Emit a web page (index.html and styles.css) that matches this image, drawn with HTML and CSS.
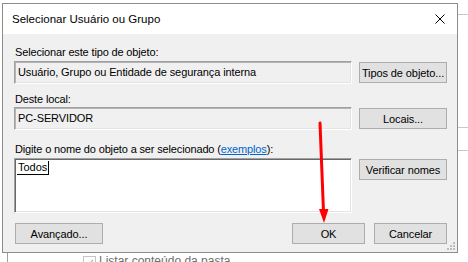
FILE: index.html
```html
<!DOCTYPE html>
<html lang="pt-BR">
<head>
  <meta charset="UTF-8">
  <title>Selecionar Usuário ou Grupo</title>
  <link rel="stylesheet" href="styles.css">
</head>
<body>
  <div class="desktop">
    <!-- window behind the dialog -->
    <div class="behind-line top"></div>
    <div class="behind-line mid1"></div>
    <div class="behind-line mid2"></div>
    <div class="behind-edge"></div>

    <div class="dialog">
      <div class="titlebar">
        <span class="title">Selecionar Usuário ou Grupo</span>
        <svg class="close" width="10" height="10" viewBox="0 0 10 10">
          <path d="M0.5 0.5 L9.5 9.5 M9.5 0.5 L0.5 9.5" stroke="#000" stroke-width="1" fill="none"/>
        </svg>
      </div>

      <div class="content">
        <div class="section first">
          <div class="label">Selecionar este tipo de objeto:</div>
          <div class="row">
            <div class="textbox readonly">Usuário, Grupo ou Entidade de segurança interna</div>
            <button class="button">Tipos de objeto...</button>
          </div>
        </div>

        <div class="section second">
          <div class="label tight">Deste local:</div>
          <div class="row">
            <div class="textbox readonly">PC-SERVIDOR</div>
            <button class="button">Locais...</button>
          </div>
        </div>

        <div class="section third">
          <div class="label">Digite o nome do objeto a ser selecionado (<a href="#" class="link">exemplos</a>):</div>
          <div class="row top">
            <div class="textarea"><span class="entry">Todos</span></div>
            <button class="button">Verificar nomes</button>
          </div>
        </div>

        <div class="actions">
          <button class="button">Avançado...</button>
          <button class="button ok">OK</button>
          <button class="button cancel">Cancelar</button>
        </div>
      </div>

      <svg class="grip" width="9" height="9" viewBox="0 0 9 9">
        <rect x="7" y="1" width="2" height="2" fill="#bdbdbd"/>
        <rect x="4" y="4" width="2" height="2" fill="#bdbdbd"/>
        <rect x="7" y="4" width="2" height="2" fill="#bdbdbd"/>
        <rect x="1" y="7" width="2" height="2" fill="#bdbdbd"/>
        <rect x="4" y="7" width="2" height="2" fill="#bdbdbd"/>
        <rect x="7" y="7" width="2" height="2" fill="#bdbdbd"/>
      </svg>
    </div>

    <div class="behind-row">
      <span class="checkbox">
        <svg width="11" height="11" viewBox="0 0 11 11">
          <path d="M2 5.5 L4.5 8 L9 3" stroke="#b5b5b5" stroke-width="1.2" fill="none"/>
        </svg>
      </span>
      <span class="behind-text">Listar conteúdo da pasta</span>
    </div>

    <!-- red annotation arrow -->
    <svg class="arrow" width="468" height="262" viewBox="0 0 468 262">
      <line x1="320" y1="123" x2="323.5" y2="212" stroke="#f00" stroke-width="3" stroke-linecap="round"/>
      <polygon points="319,209 328.5,209 324,223" fill="#f00"/>
    </svg>
  </div>
</body>
</html>
```

FILE: styles.css
```css
body {
  margin: 0;
  background-color: #fff;
  font-family: "Liberation Sans", Arial, sans-serif;
  font-size: 11px;
  color: #000;
}
.desktop {
  position: relative;
  width: 468px;
  height: 262px;
  overflow: hidden;
}
.behind-line {
  position: absolute;
  left: 458px;
  width: 10px;
  height: 1px;
  background-color: #c8c8c8;
}
.behind-line.top {
  top: 14px;
}
.behind-line.mid1 {
  top: 127px;
}
.behind-line.mid2 {
  top: 150px;
}
.behind-edge {
  position: absolute;
  left: 7px;
  top: 253px;
  width: 1px;
  height: 9px;
  background-color: #a0a0a0;
}
.dialog {
  position: relative;
  margin: 3px 0 0 2px;
  width: 456px;
  height: 250px;
  box-sizing: border-box;
  border: 1px solid #8c8c8c;
  background-color: #f0f0f0;
}
.titlebar {
  height: 30px;
  background-color: #fff;
  display: flex;
  align-items: center;
  justify-content: space-between;
  padding: 0 12px 0 9px;
}
.title {
  font-size: 11.5px;
}
.content {
  padding: 11px 10px 0 11px;
}
.section.second {
  margin-top: 8px;
}
.section.third {
  margin-top: 12px;
}
.label {
  line-height: 14px;
  margin-bottom: 2px;
  padding-left: 1px;
  letter-spacing: -0.15px;
}
.label.tight {
  margin-bottom: 1px;
}
.link {
  color: #0066cc;
}
.row {
  display: grid;
  grid-template-columns: 338px 88px;
  column-gap: 7px;
  align-items: center;
}
.row.top {
  align-items: start;
}
.textbox {
  height: 23px;
  box-sizing: border-box;
  padding-left: 3px;
  line-height: 21px;
  border: 1px solid;
  border-color: #a0a0a0 #fff #fff #a0a0a0;
  box-shadow: inset 1px 1px 0 #b4b4b4, inset -1px -1px 0 #e3e3e3;
  letter-spacing: -0.1px;
}
.textarea {
  height: 55px;
  box-sizing: border-box;
  padding: 2px 0 0 2px;
  background-color: #fff;
  border: 1px solid;
  border-color: #a0a0a0 #fff #fff #a0a0a0;
  box-shadow: inset 1px 1px 0 #696969, inset -1px -1px 0 #e3e3e3;
}
.entry {
  display: inline-block;
  padding: 0 1px;
  line-height: 13px;
  border-bottom: 1px solid #000;
  border-right: 1px solid #000;
}
.button {
  height: 21px;
  box-sizing: border-box;
  margin: 0;
  padding: 0;
  background-color: #e1e1e1;
  border: 1px solid #adadad;
  font-family: inherit;
  font-size: 11px;
  color: #000;
  letter-spacing: -0.1px;
}
.row.top .button {
  margin-top: 1px;
}
.actions {
  display: flex;
  gap: 9px;
  margin-top: 10px;
  padding-left: 1px;
}
.actions .button {
  width: 88px;
}
.actions .ok {
  margin-left: auto;
  width: 73px;
}
.actions .cancel {
  width: 73px;
}
.grip {
  position: absolute;
  right: 2px;
  bottom: 2px;
}
.behind-row {
  display: flex;
  align-items: flex-start;
  gap: 3px;
  padding-left: 83px;
  margin-top: 1px;
}
.checkbox {
  width: 11px;
  height: 11px;
  margin-top: 2px;
  border: 1px solid #c4c4c4;
  background-color: #fff;
  display: flex;
}
.behind-text {
  font-size: 12px;
  line-height: 14px;
  color: #6d6d6d;
}
.arrow {
  position: absolute;
  left: 0;
  top: 0;
  pointer-events: none;
}
```
